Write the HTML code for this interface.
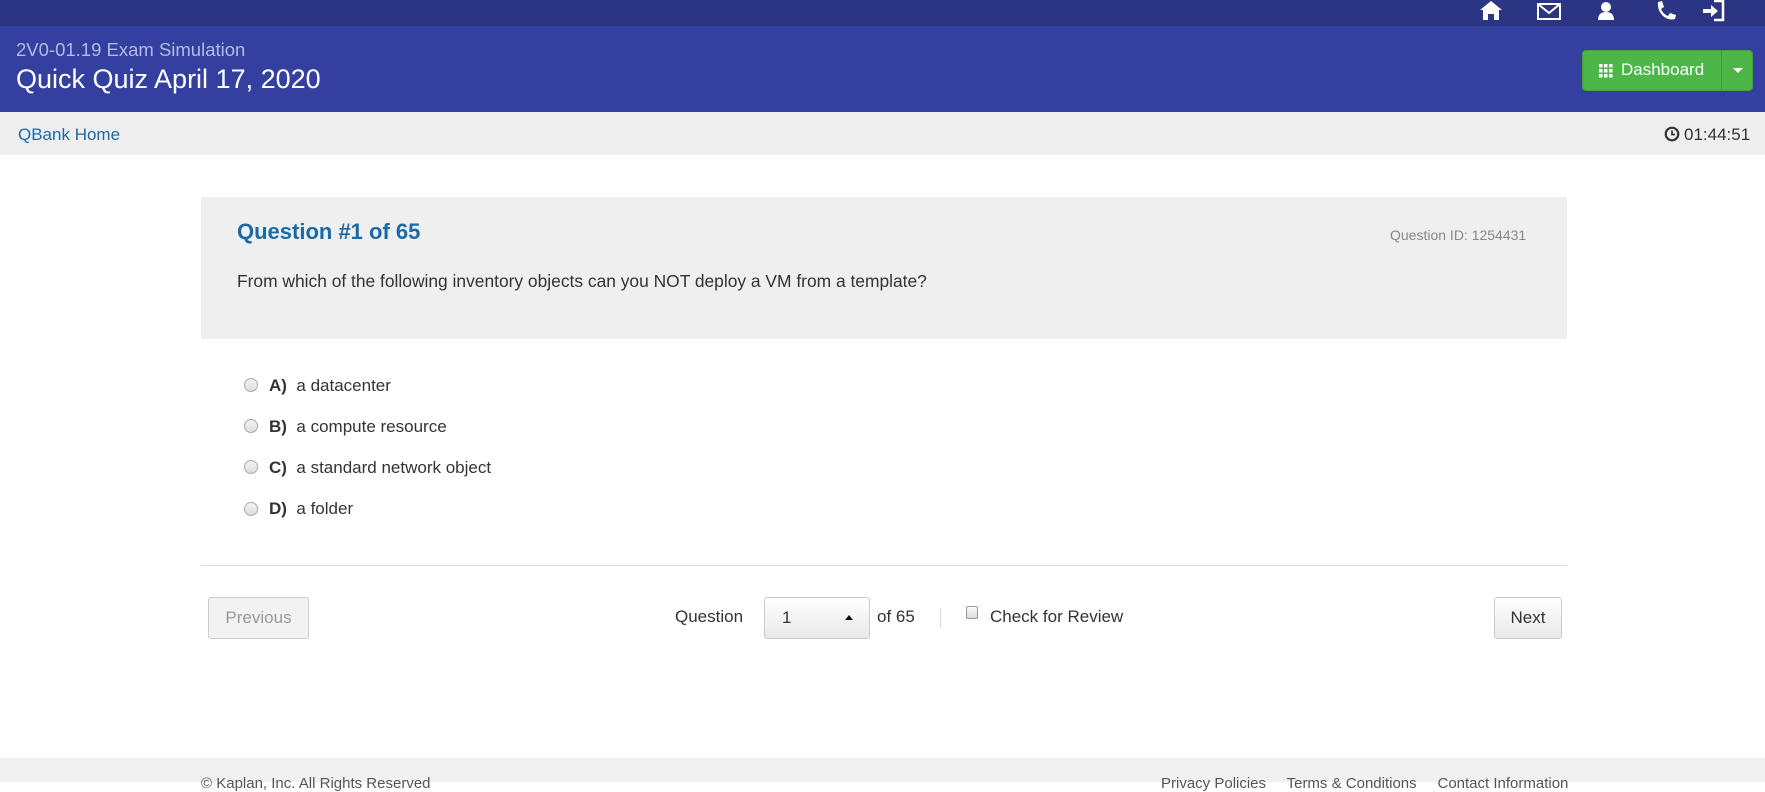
<!DOCTYPE html>
<html><head><style>
*{margin:0;padding:0;box-sizing:border-box}
body{width:1765px;height:782px;overflow:hidden;font-family:"Liberation Sans",Arial,sans-serif;background:#fff;position:relative;color:#333}
.a{position:absolute}
.top{left:0;top:0;width:1765px;height:26px;background:#2b3583}
.hdr{left:0;top:26px;width:1765px;height:86px;background:#3340a0}
.bar{left:0;top:112px;width:1765px;height:43px;background:#eeeeee}
.panel{left:201px;top:197px;width:1366px;height:142px;background:#efefef}
.btn{border:1px solid #ccc;border-radius:3px;background:linear-gradient(#fff,#e8e8e8);font-size:17px;display:flex;align-items:center;justify-content:center}
.radio{width:14px;height:14px;border-radius:50%;border:1px solid #aaa;background:linear-gradient(#f4f4f4,#ddd)}
.opt{font-size:17px;color:#333}
</style></head><body>
<div class="a top"></div>
<div class="a hdr"></div>
<svg class="a" style="left:1478px;top:0" width="270" height="22" viewBox="0 0 270 22" fill="#fff">
<path d="M2 10 L13 1 L24 10 L21 10 L21 20 L16 20 L16 14 L10 14 L10 20 L5 20 L5 10Z"/>
<path d="M60 4 H82 V19 H60Z M60 4 L71 13 L82 4" fill="none" stroke="#fff" stroke-width="2"/>
<circle cx="128" cy="7" r="5"/><path d="M120 20 Q120 12 128 12 Q136 12 136 20Z"/>
<path d="M180 2 L184 1 L186 7 L183 9 Q185 14 190 16 L192 13 L198 15 L197 19 Q190 21 184 15 Q179 9 180 2Z"/>
<path d="M236 1 H245 V20 H236" fill="none" stroke="#fff" stroke-width="2.5"/><path d="M225 9 H233 V5 L240 11 L233 17 V13 H225Z"/>
</svg>
<div class="a" style="left:16px;top:39px;font-size:18.5px;color:#b4bbe0">2V0-01.19 Exam Simulation</div>
<div class="a" style="left:16px;top:64px;font-size:27px;color:#fff">Quick Quiz April 17, 2020</div>
<div class="a" style="left:1582px;top:50px;width:171px;height:41px;background:#4cb748;border:1px solid #3ea13a;border-radius:4px"></div>
<div class="a" style="left:1721px;top:50px;width:1px;height:41px;background:#3e9e3a"></div>
<svg class="a" style="left:1599px;top:64px" width="14" height="14" fill="#fff"><rect x="0" y="0" width="3.5" height="3.5"/><rect x="5" y="0" width="3.5" height="3.5"/><rect x="10" y="0" width="3.5" height="3.5"/><rect x="0" y="5" width="3.5" height="3.5"/><rect x="5" y="5" width="3.5" height="3.5"/><rect x="10" y="5" width="3.5" height="3.5"/><rect x="0" y="10" width="3.5" height="3.5"/><rect x="5" y="10" width="3.5" height="3.5"/><rect x="10" y="10" width="3.5" height="3.5"/></svg>
<div class="a" style="left:1621px;top:60px;font-size:17px;color:#fff">Dashboard</div>
<div class="a" style="left:1733px;top:68px;width:0;height:0;border-left:5px solid transparent;border-right:5px solid transparent;border-top:5px solid #fff"></div>
<div class="a bar"></div>
<div class="a" style="left:18px;top:125px;font-size:17px;color:#1b6aa8">QBank Home</div>
<svg class="a" style="left:1664px;top:126px" width="16" height="16"><circle cx="8" cy="8" r="6.3" fill="none" stroke="#333" stroke-width="2.2"/><path d="M8 4.5V8.5H11" fill="none" stroke="#333" stroke-width="1.8"/></svg>
<div class="a" style="left:1684px;top:125px;font-size:17px;color:#333">01:44:51</div>
<div class="a panel"></div>
<div class="a" style="left:237px;top:219px;font-size:22px;font-weight:bold;color:#1b6aa8">Question #1 of 65</div>
<div class="a" style="left:1390px;top:227px;font-size:14px;color:#888">Question ID: 1254431</div>
<div class="a" style="left:237px;top:271px;font-size:17.4px;color:#333">From which of the following inventory objects can you NOT deploy a VM from a template?</div>
<div class="a radio" style="left:244px;top:378px"></div><div class="a opt" style="left:269px;top:376px"><b>A)</b>&nbsp; a datacenter</div>
<div class="a radio" style="left:244px;top:419px"></div><div class="a opt" style="left:269px;top:417px"><b>B)</b>&nbsp; a compute resource</div>
<div class="a radio" style="left:244px;top:460px"></div><div class="a opt" style="left:269px;top:458px"><b>C)</b>&nbsp; a standard network object</div>
<div class="a radio" style="left:244px;top:502px"></div><div class="a opt" style="left:269px;top:499px"><b>D)</b>&nbsp; a folder</div>
<div class="a" style="left:201px;top:565px;width:1366px;height:1px;background:#ddd"></div>
<div class="a btn" style="left:208px;top:597px;width:101px;height:42px;color:#999;background:#f2f2f2">Previous</div>
<div class="a" style="left:675px;top:607px;font-size:17px">Question</div>
<div class="a btn" style="left:764px;top:597px;width:106px;height:42px;justify-content:flex-start;padding-left:17px">1</div>
<div class="a" style="left:845px;top:615px;width:0;height:0;border-left:4px solid transparent;border-right:4px solid transparent;border-bottom:5px solid #111"></div>
<div class="a" style="left:877px;top:607px;font-size:17px">of 65</div>
<div class="a" style="left:940px;top:608px;width:1px;height:20px;background:#ddd"></div>
<div class="a" style="left:966px;top:606px;width:12px;height:13px;border:1px solid #999;border-radius:2px;background:linear-gradient(#fafafa,#ddd)"></div>
<div class="a" style="left:990px;top:607px;font-size:17px">Check for Review</div>
<div class="a btn" style="left:1494px;top:597px;width:68px;height:42px">Next</div>
<div class="a" style="left:0;top:758px;width:1765px;height:24px;background:#f0f0f0"></div>
<div class="a" style="left:201px;top:775px;font-size:15px;color:#555">© Kaplan, Inc. All Rights Reserved</div>
<div class="a" style="left:1161px;top:775px;font-size:15px;color:#555">Privacy Policies &nbsp;&nbsp;&nbsp; Terms &amp; Conditions &nbsp;&nbsp;&nbsp; Contact Information</div>
</body></html>
